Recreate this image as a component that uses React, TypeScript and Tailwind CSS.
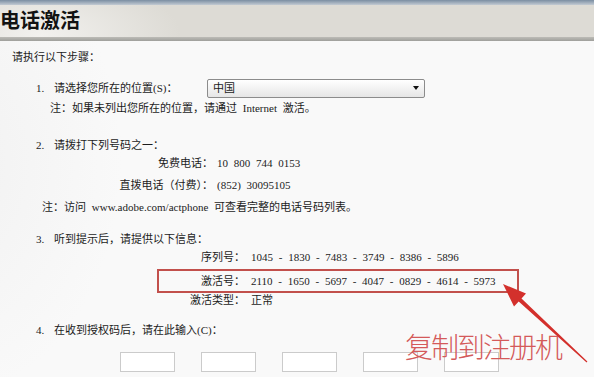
import React from 'react'

const txt = '"Liberation Serif", "Noto Sans CJK SC", serif'

export default function App() {
  const boxes = [0, 1, 2, 3, 4]

  return (
    <div className="w-[610px] h-[377px] overflow-hidden bg-white flex">
      <div
        className="w-[594px] h-[377px] flex flex-col bg-[#f8f8f8] relative text-[11px] text-[#1c1c1c] [word-spacing:3px]"
        style={{ fontFamily: txt }}
      >
        {/* top strip */}
        <div className="h-[5px] bg-gradient-to-b from-[#7b8ea2] to-[#c3cbd3]" />

        {/* header */}
        <div className="h-[32px] flex items-center bg-[radial-gradient(ellipse_140px_60px_at_40px_30px,#f2f1ee,#dddbd5)]">
          <span className="text-[20px] font-bold text-[#121212] leading-none [word-spacing:0]">电话激活</span>
        </div>
        <div className="h-[4px] bg-gradient-to-b from-[#bdbcb7] to-[#9f9f9b]" />

        {/* content */}
        <div className="flex-1 flex flex-col bg-[radial-gradient(ellipse_260px_340px_at_-60px_120px,#f1f1f1,#f9f9f9_70%)]">
          <div className="mt-[7px] ml-[12px] h-[18px] leading-[18px]">请执行以下步骤：</div>

          <div className="mt-[13px] ml-[36px] h-[18px] flex items-center">
            <span className="w-[18px]">1.</span>
            <span className="w-[153px]">请选择您所在的位置(S)：</span>
            <div className="w-[218px] h-[19px] rounded-[2px] border border-[#8c8c8c] bg-gradient-to-b from-white to-[#e6e6e6] flex items-center justify-between px-[5px]">
              <span>中国</span>
              <span className="w-0 h-0 border-l-[3px] border-r-[3px] border-t-[4px] border-l-transparent border-r-transparent border-t-[#111]" />
            </div>
          </div>
          <div className="mt-[2px] ml-[50px] h-[18px] leading-[18px]">注：如果未列出您所在的位置，请通过 Internet 激活。</div>

          <div className="mt-[19px] ml-[36px] h-[18px] leading-[18px] flex">
            <span className="w-[18px]">2.</span>
            <span>请拨打下列号码之一：</span>
          </div>
          <div className="h-[18px] leading-[18px] grid grid-cols-[213px_1fr]">
            <span className="text-right">免费电话：</span>
            <span className="pl-[4px]">10 800 744 0153</span>
          </div>
          <div className="mt-[4px] h-[18px] leading-[18px] grid grid-cols-[213px_1fr]">
            <span className="text-right">直拨电话（付费）：</span>
            <span className="pl-[4px]">(852) 30095105</span>
          </div>
          <div className="mt-[4px] ml-[42px] h-[18px] leading-[18px]">注：访问 www.adobe.com/actphone 可查看完整的电话号码列表。</div>

          <div className="mt-[14px] ml-[36px] h-[18px] leading-[18px] flex">
            <span className="w-[18px]">3.</span>
            <span>听到提示后，请提供以下信息：</span>
          </div>
          <div className="h-[18px] leading-[18px] grid grid-cols-[245px_1fr]">
            <span className="text-right">序列号：</span>
            <span className="pl-[6px]">1045 - 1830 - 7483 - 3749 - 8386 - 5896</span>
          </div>
          <div className="mt-[3px] ml-[157px] w-[362px] h-[24px] border-2 border-[#c2504c] grid grid-cols-[86px_1fr] items-center">
            <span className="text-right">激活号：</span>
            <span className="pl-[6px]">2110 - 1650 - 5697 - 4047 - 0829 - 4614 - 5973</span>
          </div>
          <div className="h-[14px] leading-[14px] grid grid-cols-[245px_1fr]">
            <span className="text-right">激活类型：</span>
            <span className="pl-[6px]">正常</span>
          </div>

          <div className="mt-[14px] ml-[36px] h-[18px] leading-[18px] flex">
            <span className="w-[18px]">4.</span>
            <span>在收到授权码后，请在此输入(C)：</span>
          </div>
          <div className="mt-[13px] ml-[120px] flex gap-[26px]">
            {boxes.map((b) => (
              <div key={b} className="w-[55px] h-[20px] border border-[#cbcbcb] bg-white" />
            ))}
          </div>
        </div>

        {/* annotation */}
        <div
          className="absolute left-[405px] top-[332px] text-[28px] leading-none tracking-[-2px] text-[#d45a5a] font-light [word-spacing:0]"
          style={{ fontFamily: '"Noto Sans CJK SC", sans-serif' }}
        >
          复制到注册机
        </div>
        <svg className="absolute left-0 top-0" width="610" height="377" viewBox="0 0 610 377">
          <polygon
            points="503,284 526,293.5 521.5,298.5 587.4,361.6 586.6,362.4 518.7,301.5 514,306.5"
            fill="#d3302c"
          />
        </svg>
      </div>
    </div>
  )
}
